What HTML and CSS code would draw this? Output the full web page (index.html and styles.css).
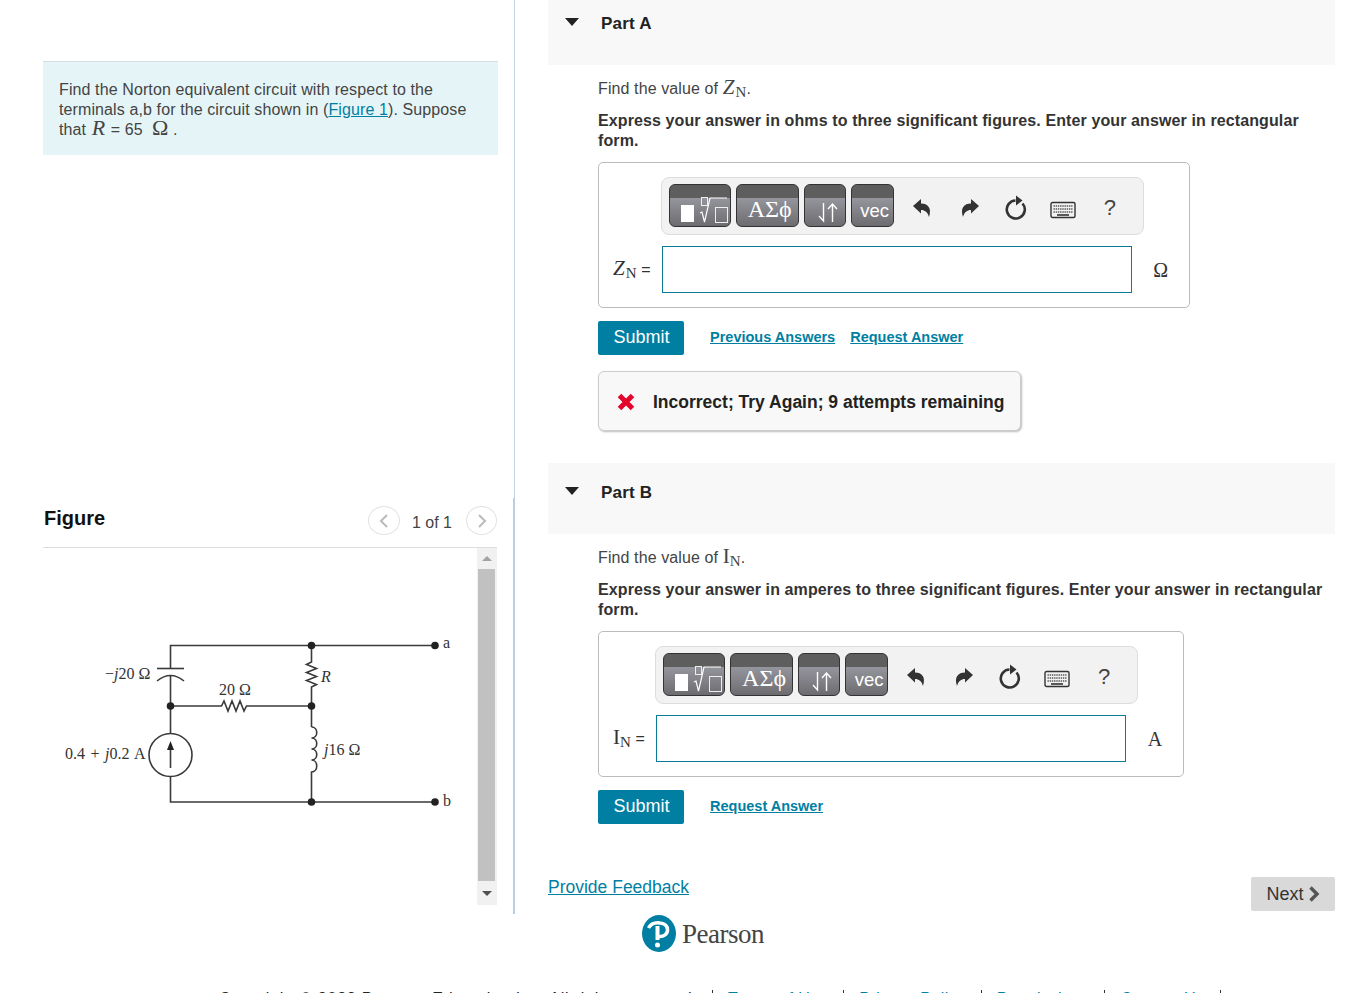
FILE: index.html
```html
<!DOCTYPE html>
<html>
	<head>
		<meta charset="utf-8">
		<title>Part A - Norton equivalent</title>
		<link rel="stylesheet" href="styles.css">
	</head>
	<body>
		<svg class="sprite" width="0" height="0">
			<symbol id="undo" viewBox="0 0 20 20">
				<path d="M1 8 L9 1 V5.5 C16 5.5 20 10 17 19 C15.5 14 13 12 9 12 V15.5 Z"/>
			</symbol>
			<symbol id="redo" viewBox="0 0 20 20">
				<path d="M19 8 L11 1 V5.5 C4 5.5 0 10 3 19 C4.5 14 7 12 11 12 V15.5 Z"/>
			</symbol>
			<symbol id="reload" viewBox="0 0 24 26">
				<path d="M11.5 5.5 A9 9 0 1 0 18.5 8.5" fill="none" stroke="#333" stroke-width="2.6"/>
				<path d="M12 .5 L18.5 5.5 L12 10.5 Z"/>
			</symbol>
			<symbol id="keyboard" viewBox="0 0 26 18">
				<rect x="1" y="1.5" width="24" height="15" rx="1.5" fill="#f2f2f2" stroke="#333" stroke-width="1.4"/>
				<path d="M3.5 5 H22.5 M3.5 8 H22.5 M3.5 11 H22.5" stroke="#555" stroke-width="1.6" stroke-dasharray="1.4 .8"/>
				<path d="M7 14 H19" stroke="#333" stroke-width="1.6"/>
			</symbol>
			<symbol id="root" viewBox="0 0 60 41">
				<rect x="11" y="20" width="13" height="17" fill="#fff"/>
				<path d="M30 28 L32 27 L34.5 37 L40 13 H57" fill="none" stroke="#fff" stroke-width="1.2"/>
				<rect x="31.5" y="12.5" width="6" height="8" fill="none" stroke="#eee"/>
				<rect x="45.5" y="22.5" width="12" height="15" fill="none" stroke="#eee"/>
			</symbol>
			<symbol id="arrows" viewBox="0 0 40 41">
				<path d="M18.5 18 V36 L14 31" fill="none" stroke="#fff" stroke-width="1.4"/>
				<path d="M27.5 37 V19 M23 24 L27.5 19 L32 24" fill="none" stroke="#fff" stroke-width="1.4"/>
			</symbol>
		</svg>

		<div class="page">
			<div class="left">
				<div class="intro-section">
					<div class="intro">
						Find the Norton equivalent circuit with respect to the terminals a,b for the circuit shown in (<a href="#">Figure 1</a>). Suppose that <i class="math-r">R</i> = 65 &nbsp;<span class="math-o">Ω</span> .
					</div>
				</div>
				<div class="figure-section">
					<div class="figure-head">
						<h2>Figure</h2>
						<div class="pager">
							<span class="pager-btn"><svg width="10" height="16" viewBox="0 0 10 16"><path d="M8 2 L2 8 L8 14" fill="none" stroke="#bbb" stroke-width="2"/></svg></span>
							<span class="pager-text">1 of 1</span>
							<span class="pager-btn"><svg width="10" height="16" viewBox="0 0 10 16"><path d="M2 2 L8 8 L2 14" fill="none" stroke="#bbb" stroke-width="2"/></svg></span>
						</div>
					</div>
					<div class="figure-body">
						<svg class="circuit" width="434" height="357" viewBox="43 548 434 357">
							<g fill="none" stroke="#3a3a3a" stroke-width="1.6">
								<path d="M170.5 668 V645.5 H435"/>
								<path d="M157 668.5 H184"/>
								<path d="M157 681 Q170.5 670 184 681"/>
								<path d="M170.5 676 V733.5"/>
								<path d="M170.5 706 H221.5 l2.5 -5 l4 10 l4 -10 l4 10 l4 -10 l4 10 l2.5 -5 H311.5"/>
								<circle cx="170.5" cy="755" r="21.5"/>
								<path d="M170.5 768 V746"/>
								<path d="M170.5 776.5 V802 H435"/>
								<path d="M311.5 645 V662 l-5 2.5 l10 4 l-10 4 l10 4 l-10 4 l10 4 l-5 2.5 V727"/>
								<path d="M311.5 727 c7 0 7 11 0 11 c7 0 7 11 0 11 c7 0 7 11 0 11 c7 0 7 12 0 12 V802"/>
							</g>
							<g fill="#222">
								<path d="M170.5 741 l3.5 9 h-7 z"/>
								<circle cx="311.5" cy="645.5" r="3.8"/>
								<circle cx="435" cy="645.5" r="3.8"/>
								<circle cx="170.5" cy="706" r="3.8"/>
								<circle cx="311.5" cy="706" r="3.8"/>
								<circle cx="311.5" cy="802" r="3.8"/>
								<circle cx="435" cy="802" r="3.8"/>
							</g>
							<g class="circuit-labels">
								<text x="105" y="679">−<tspan font-style="italic">j</tspan>20 Ω</text>
								<text x="219" y="695">20 Ω</text>
								<text x="321" y="682" font-style="italic">R</text>
								<text class="source-label" x="65" y="759">0.4 + <tspan font-style="italic">j</tspan>0.2 A</text>
								<text x="324" y="755"><tspan font-style="italic">j</tspan>16 Ω</text>
								<text x="443" y="648">a</text>
								<text x="443" y="806">b</text>
							</g>
						</svg>
						<div class="scrollbar">
							<span class="arrow-up"></span>
							<span class="thumb"></span>
							<span class="arrow-down"></span>
						</div>
					</div>
				</div>
			</div>

			<div class="right">
				<div class="part-head"><span class="caret"></span><h3>Part A</h3></div>
				<div class="part-body">
					<p>Find the value of <i class="math">Z</i><span class="sub">N</span>.</p>
					<p class="strong">Express your answer in ohms to three significant figures. Enter your answer in rectangular form.</p>
					<div class="answer">
						<div class="toolbar">
							<span class="tool tool-root"><svg class="tool-svg"><use href="#root"/></svg></span>
							<span class="tool tool-greek">ΑΣϕ</span>
							<span class="tool tool-arrows"><svg class="tool-svg"><use href="#arrows"/></svg></span>
							<span class="tool tool-vec">vec</span>
							<svg class="ico ico-undo"><use href="#undo"/></svg>
							<svg class="ico ico-redo"><use href="#redo"/></svg>
							<svg class="ico ico-reload"><use href="#reload"/></svg>
							<svg class="ico ico-keys"><use href="#keyboard"/></svg>
							<span class="help">?</span>
						</div>
						<label class="var"><i class="math">Z</i><span class="sub">N</span> =</label>
						<div class="field"></div>
						<span class="unit">Ω</span>
					</div>
					<div class="actions">
						<button class="submit">Submit</button>
						<a class="action-link" href="#">Previous Answers</a>
						<a class="action-link" href="#">Request Answer</a>
					</div>
					<div class="alert">
						<svg width="18" height="18" viewBox="0 0 18 18"><path d="M2.5 2.5 L15.5 15.5 M15.5 2.5 L2.5 15.5" stroke="#e2062c" stroke-width="5"/></svg>
						<span>Incorrect; Try Again; 9 attempts remaining</span>
					</div>
				</div>

				<div class="part-head part-b"><span class="caret"></span><h3>Part B</h3></div>
				<div class="part-body">
					<p>Find the value of <span class="math-up">I</span><span class="sub">N</span>.</p>
					<p class="strong">Express your answer in amperes to three significant figures. Enter your answer in rectangular form.</p>
					<div class="answer">
						<div class="toolbar">
							<span class="tool tool-root"><svg class="tool-svg"><use href="#root"/></svg></span>
							<span class="tool tool-greek">ΑΣϕ</span>
							<span class="tool tool-arrows"><svg class="tool-svg"><use href="#arrows"/></svg></span>
							<span class="tool tool-vec">vec</span>
							<svg class="ico ico-undo"><use href="#undo"/></svg>
							<svg class="ico ico-redo"><use href="#redo"/></svg>
							<svg class="ico ico-reload"><use href="#reload"/></svg>
							<svg class="ico ico-keys"><use href="#keyboard"/></svg>
							<span class="help">?</span>
						</div>
						<label class="var"><span class="math-up">I</span><span class="sub">N</span> =</label>
						<div class="field"></div>
						<span class="unit">A</span>
					</div>
					<div class="actions">
						<button class="submit">Submit</button>
						<a class="action-link" href="#">Request Answer</a>
					</div>
				</div>

				<div class="bottom-row">
					<a class="feedback" href="#">Provide Feedback</a>
					<button class="next">Next <svg width="12" height="16" viewBox="0 0 12 16"><path d="M2.5 1.5 L9 8 L2.5 14.5" fill="none" stroke="#555" stroke-width="3.4"/></svg></button>
				</div>
				<div class="logo">
					<svg width="34" height="37" viewBox="0 0 34 37">
						<ellipse cx="17" cy="18.5" rx="17" ry="18.5" fill="#007fa3"/>
						<path d="M6.5 13 C9 8.5 14 7.5 18 8 C23 8.5 25.5 11 25.5 15 C25.5 19.5 21 22 17 21.5" fill="none" stroke="#fff" stroke-width="3.5"/>
						<path d="M15.5 11 V25" stroke="#fff" stroke-width="4"/>
						<circle cx="15.5" cy="30" r="2.5" fill="#fff"/>
					</svg>
					<span class="logo-text">Pearson</span>
				</div>
			</div>
		</div>

		<div class="footer">
			<span class="copy">Copyright © 2022 Pearson Education Inc. All rights reserved.</span>
			<a href="#">Terms of Use</a>
			<a href="#">Privacy Policy</a>
			<a href="#">Permissions</a>
			<a href="#">Contact Us</a>
		</div>
	</body>
</html>
```

FILE: styles.css
```css
html, body {
	margin: 0;
	height: 993px;
	overflow: hidden;
	background-color: #ffffff;
}

body {
	font-family: "Liberation Sans", Arial, sans-serif;
	font-size: 16px;
	line-height: 20px;
	letter-spacing: 0.11px;
	color: #444444;
}

a {
	color: #007fa3;
}

.sprite {
	position: absolute;
}

.page {
	display: flex;
	height: 990px;
}

/* left column */
.left {
	width: 515px;
	height: 914px;
	flex: none;
}

.intro-section {
	height: 498px;
	box-sizing: border-box;
	padding: 61px 16px 0 43px;
	border-right: 1px solid #c0d4e6;
}

.intro {
	background-color: #e5f5f7;
	border-top: 1px solid #d5dfe3;
	padding: 18px 16px 16px;
	height: 59px;
	line-height: 20px;
}

.math-r,
.math-o {
	font-family: "Liberation Serif", serif;
	font-size: 22px;
	line-height: 0;
}

.math-r {
	margin: 0 1px;
}

.figure-section {
	width: 515px;
	height: 416px;
	box-sizing: border-box;
	padding: 0 16px 0 43px;
	border-right: 2px solid #b9cfe3;
}

.figure-head {
	display: flex;
	justify-content: space-between;
	height: 49px;
	border-bottom: 1px solid #dddddd;
}

.figure-head h2 {
	margin: 8px 0 0 1px;
	font-size: 20px;
	line-height: 24px;
	letter-spacing: 0;
	color: #111111;
}

.pager {
	display: flex;
	align-items: flex-start;
	padding-top: 8px;
}

.pager-btn {
	display: flex;
	align-items: center;
	justify-content: center;
	width: 30px;
	height: 27px;
	border: 1px solid #e3e3e3;
	border-radius: 50%;
}

.pager-btn:last-child {
	width: 29px;
}

.pager-text {
	margin: 7px 14px 0 12px;
	letter-spacing: 0;
	color: #444444;
}

.figure-body {
	display: flex;
	height: 357px;
}

.circuit {
	display: block;
	flex: none;
}

.circuit-labels {
	font-family: "Liberation Serif", serif;
	font-size: 16px;
	letter-spacing: 0;
	fill: #333333;
}

.source-label {
	word-spacing: 1.5px;
}

.scrollbar {
	position: relative;
	width: 20px;
	background-color: #f1f1f1;
}

.thumb {
	position: absolute;
	left: 1px;
	top: 21px;
	width: 17px;
	height: 312px;
	background-color: #c1c1c1;
}

.arrow-up,
.arrow-down {
	position: absolute;
	left: 5px;
	width: 0;
	height: 0;
	border-left: 5px solid transparent;
	border-right: 5px solid transparent;
}

.arrow-up {
	top: 8px;
	border-bottom: 5px solid #a3a3a3;
}

.arrow-down {
	bottom: 9px;
	border-top: 5px solid #505050;
}

/* right column */
.right {
	width: 787px;
	margin-left: 33px;
	margin-top: -6px;
	flex: none;
}

.part-head {
	display: flex;
	height: 71px;
	background-color: #f8f8f8;
}

.part-b {
	margin-top: 32px;
}

.caret {
	width: 0;
	height: 0;
	margin: 24px 0 0 17px;
	border-left: 7px solid transparent;
	border-right: 7px solid transparent;
	border-top: 8px solid #222222;
}

.part-head h3 {
	margin: 20px 0 0 22px;
	font-size: 17px;
	line-height: 20px;
	letter-spacing: 0.2px;
	color: #222222;
}

.part-body {
	padding: 14px 0 0 50px;
}

.part-body p {
	margin: 0 0 12px;
}

.part-body .strong {
	margin-bottom: 11px;
	font-weight: bold;
	color: #333333;
}

.math,
.math-up {
	font-family: "Liberation Serif", serif;
	font-size: 21px;
	line-height: 0;
}

.math {
	letter-spacing: 1px;
}

.sub {
	font-family: "Liberation Serif", serif;
	font-size: 15px;
	line-height: 0;
	position: relative;
	top: 3px;
}

.answer {
	display: grid;
	grid-template-columns: auto 470px 57px;
	grid-row-gap: 11px;
	width: fit-content;
	padding: 14px 0 14px 14px;
	border: 1px solid #bbbbbb;
	border-radius: 5px;
}

.toolbar {
	grid-column: 2 / 4;
	display: flex;
	align-items: flex-start;
	width: 483px;
	height: 58px;
	box-sizing: border-box;
	margin-left: -1px;
	padding: 6px 0 0 7px;
	background-color: #f2f2f2;
	border: 1px solid #dddddd;
	border-radius: 8px;
}

.tool {
	height: 43px;
	box-sizing: border-box;
	margin-right: 5px;
	border: 1px solid #333333;
	border-radius: 6px;
	background: linear-gradient(#5e5e5e 0, #5e5e5e 13px, #95959d 13px, #6c6c70 100%);
	color: #ffffff;
	text-align: center;
}

.tool-svg {
	display: block;
	width: 100%;
	height: 100%;
}

.tool-root {
	width: 62px;
}

.tool-greek {
	width: 63px;
	padding: 11px 0 0 5px;
	font-family: "Liberation Serif", serif;
	font-size: 24px;
	line-height: 26px;
	letter-spacing: 0;
}

.tool-arrows {
	width: 42px;
}

.tool-vec {
	width: 43px;
	padding: 15px 0 0 5px;
	font-size: 18.5px;
	line-height: 22px;
	letter-spacing: 0;
}

.ico {
	flex: none;
	fill: #333333;
}

.ico-undo {
	width: 20px;
	height: 20px;
	margin: 14px 0 0 13px;
}

.ico-redo {
	width: 20px;
	height: 20px;
	margin: 14px 0 0 28px;
}

.ico-reload {
	width: 24px;
	height: 26px;
	margin: 11px 0 0 24px;
}

.ico-keys {
	width: 26px;
	height: 18px;
	margin: 17px 0 0 22px;
}

.help {
	margin: 11px 0 0 28px;
	font-size: 22px;
	line-height: 26px;
	letter-spacing: 0;
	color: #444444;
}

.var {
	display: flex;
	align-items: baseline;
	align-self: center;
	margin-right: 11px;
	white-space: pre;
	color: #333333;
}

.field {
	height: 47px;
	box-sizing: border-box;
	border: 1px solid #0b7a99;
}

.unit {
	align-self: center;
	text-align: center;
	margin-left: 1px;
	width: 56px;
	font-family: "Liberation Serif", serif;
	font-size: 20px;
	color: #333333;
}

.actions {
	display: flex;
	align-items: center;
	margin-top: 13px;
}

.submit {
	width: 86px;
	height: 34px;
	margin-right: 26px;
	padding: 0 0 2px 1px;
	border: 0;
	border-radius: 2px;
	background-color: #007fa3;
	color: #ffffff;
	font-family: inherit;
	font-size: 18px;
}

.action-link {
	margin: 0 15px 2px 0;
	font-size: 14.5px;
	font-weight: bold;
	letter-spacing: 0;
}

.alert {
	display: flex;
	align-items: center;
	width: 423px;
	height: 60px;
	box-sizing: border-box;
	margin-top: 16px;
	padding: 2px 0 0 18px;
	background-color: #f8f8f8;
	border: 1px solid #cccccc;
	border-radius: 6px;
	box-shadow: 1px 1px 2px #bbbbbb;
	font-size: 17.5px;
	font-weight: bold;
	letter-spacing: 0;
	color: #222222;
}

.alert span {
	margin-left: 18px;
}

.bottom-row {
	display: flex;
	justify-content: space-between;
	align-items: flex-start;
	margin-top: 53px;
}

.feedback {
	font-size: 17.5px;
	letter-spacing: 0;
}

.next {
	display: flex;
	align-items: center;
	gap: 4px;
	justify-content: center;
	width: 84px;
	height: 34px;
	padding: 0;
	border: 0;
	border-radius: 2px;
	background-color: #d9d9d9;
	color: #333333;
	font-family: inherit;
	font-size: 18px;
}

.logo {
	display: flex;
	align-items: center;
	margin: 4px 0 0 94px;
}

.logo-text {
	margin-left: 6px;
	font-family: "Liberation Serif", serif;
	font-size: 27px;
	letter-spacing: -0.5px;
	color: #444444;
}

/* footer, mostly below the fold */
.footer {
	display: flex;
	margin-left: 219px;
	line-height: 17px;
	letter-spacing: 0.5px;
}

.footer .copy {
	width: 493px;
	border-right: 1px solid #333333;
	letter-spacing: 0.8px;
	white-space: nowrap;
	color: #222222;
}

.footer a {
	padding: 0 15px;
	border-right: 1px solid #333333;
	text-decoration: none;
	white-space: nowrap;
}
```
